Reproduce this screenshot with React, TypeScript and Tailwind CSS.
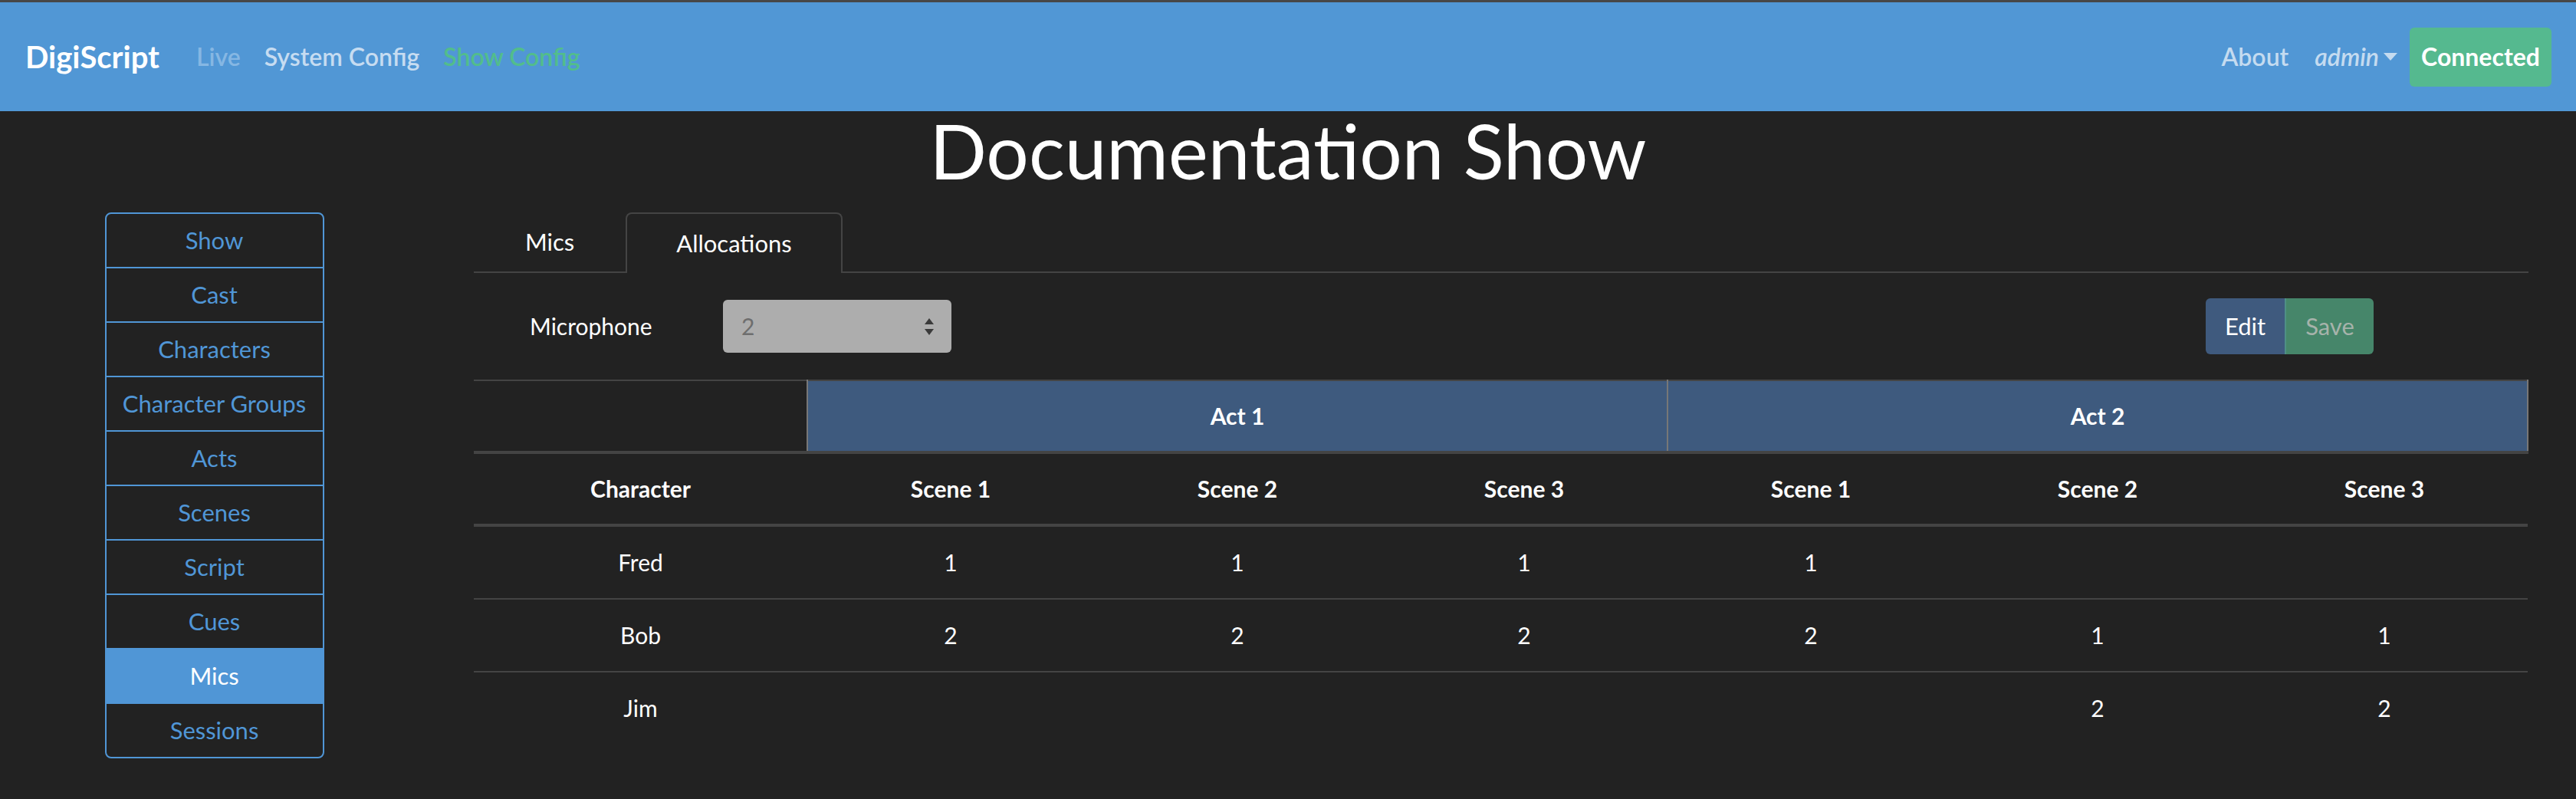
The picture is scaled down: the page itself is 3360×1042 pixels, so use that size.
import React from 'react';

const sections = ['Show', 'Cast', 'Characters', 'Character Groups', 'Acts', 'Scenes', 'Script', 'Cues', 'Mics', 'Sessions'];

const acts = [
  { name: 'Act 1', scenes: ['Scene 1', 'Scene 2', 'Scene 3'] },
  { name: 'Act 2', scenes: ['Scene 1', 'Scene 2', 'Scene 3'] },
];

const allocations = [
  { character: 'Fred', mics: ['1', '1', '1', '1', '', ''] },
  { character: 'Bob', mics: ['2', '2', '2', '2', '1', '1'] },
  { character: 'Jim', mics: ['', '', '', '', '2', '2'] },
];

function Navbar() {
  return (
    <nav className="h-[142px] bg-[#5197d5] flex items-center pl-[33px] pr-[32px]">
      <span className="text-[40px] font-bold text-white mr-[48px]">DigiScript</span>
      <div className="flex items-center gap-[31px] text-[32px] font-semibold">
        <span className="text-[#86b7e3]">Live</span>
        <span className="text-[#c6dcf1]">System Config</span>
        <span className="text-[#52bd8c]">Show Config</span>
      </div>
      <div className="ml-auto flex items-center text-[32px] font-semibold text-[#c4dbf0]">
        <span className="mr-[34px]">About</span>
        <span className="italic">admin</span>
        <svg className="ml-[6px] mr-[16px]" width="18" height="10" viewBox="0 0 18 10">
          <path d="M0 0 H18 L9 10 Z" fill="#c4dbf0" />
        </svg>
        <button className="h-[77px] w-[185px] rounded-[6px] bg-[#55b98f] text-white font-bold">Connected</button>
      </div>
    </nav>
  );
}

function Sidebar() {
  return (
    <div className="w-[560px] flex justify-center">
      <div className="w-[286px] border-2 border-[#5096d6] rounded-[8px] overflow-hidden">
        {sections.map((s, i) => (
          <div
            key={s}
            className={
              'flex items-center justify-center text-[31px] ' +
              (i > 0 ? 'h-[71px] border-t-2 border-[#5096d6] ' : 'h-[69px] ') +
              (s === 'Mics' ? 'bg-[#5096d6] text-white' : 'text-[#5096d6]')
            }
          >
            {s}
          </div>
        ))}
      </div>
    </div>
  );
}

function Tabs() {
  return (
    <div className="flex border-b-2 border-[#444] h-[79px] text-[31px] text-white">
      <div className="px-[67px] flex items-center">Mics</div>
      <div className="px-[64px] flex items-center border-2 border-[#444] border-b-0 rounded-t-[8px] -mb-[2px] bg-[#222] h-[79px]">
        Allocations
      </div>
    </div>
  );
}

function Toolbar() {
  return (
    <div className="flex items-center mt-[33px] text-[30px]">
      <span className="pl-[73px] w-[325px] text-white">Microphone</span>
      <div className="w-[298px] h-[69px] rounded-[6px] bg-[#adadad] flex items-center pl-[24px] pr-[22px]">
        <span className="text-[#6e6e6e]">2</span>
        <svg className="ml-auto" width="14" height="24" viewBox="0 0 14 24">
          <path d="M7 1 L13 9 H1 Z" fill="#3a3a3a" />
          <path d="M7 23 L13 15 H1 Z" fill="#3a3a3a" />
        </svg>
      </div>
      <div className="ml-auto mr-[202px] flex h-[73px] rounded-[6px] overflow-hidden text-[31px]">
        <button className="w-[103px] bg-[#3f5a7e] text-white">Edit</button>
        <div className="w-[2px] bg-[#4f8f86]" />
        <button className="w-[114px] bg-[#46866a] text-[#a6b3ab]">Save</button>
      </div>
    </div>
  );
}

function AllocationTable() {
  return (
    <table className="mt-[33px] w-[2679px] table-fixed border-collapse text-[30px] leading-[45px] text-white">
      <colgroup>
        <col className="w-[435px]" />
        {acts.flatMap((a) => a.scenes).map((_, i) => (
          <col key={i} className="w-[374px]" />
        ))}
      </colgroup>
      <thead>
        <tr className="border-t-2 border-[#444] border-b-4">
          <th className="py-[23px]" />
          {acts.map((a) => (
            <th
              key={a.name}
              colSpan={a.scenes.length}
              className="py-[23px] bg-[#3e5a7e] border-x-2 border-x-[#777] border-b-4 border-b-[#444] font-bold"
            >
              {a.name}
            </th>
          ))}
        </tr>
        <tr className="border-b-4 border-[#444]">
          <th className="py-[23px] font-bold border-t-4 border-[#444]">Character</th>
          {acts.flatMap((a) => a.scenes.map((s) => (
            <th key={a.name + s} className="py-[23px] font-bold border-t-4 border-[#444]">
              {s}
            </th>
          )))}
        </tr>
      </thead>
      <tbody>
        {allocations.map((row, r) => (
          <tr key={row.character} className={r > 0 ? 'border-t-2 border-[#444]' : ''}>
            <td className="py-[24px] text-center">{row.character}</td>
            {row.mics.map((m, i) => (
              <td key={i} className="py-[24px] text-center">
                {m}
              </td>
            ))}
          </tr>
        ))}
      </tbody>
    </table>
  );
}

export default function App() {
  return (
    <div className="min-h-screen bg-[#222] font-['Lato','Noto_Sans',sans-serif] text-white">
      <div className="h-[3px] bg-[#474747]" />
      <Navbar />
      <h1 className="mt-[2px] text-center text-[98px] leading-none font-normal text-white">Documentation Show</h1>
      <div className="flex mt-[32px]">
        <Sidebar />
        <div className="flex-1 pl-[59px] pr-[62px]">
          <Tabs />
          <Toolbar />
          <AllocationTable />
        </div>
      </div>
    </div>
  );
}
